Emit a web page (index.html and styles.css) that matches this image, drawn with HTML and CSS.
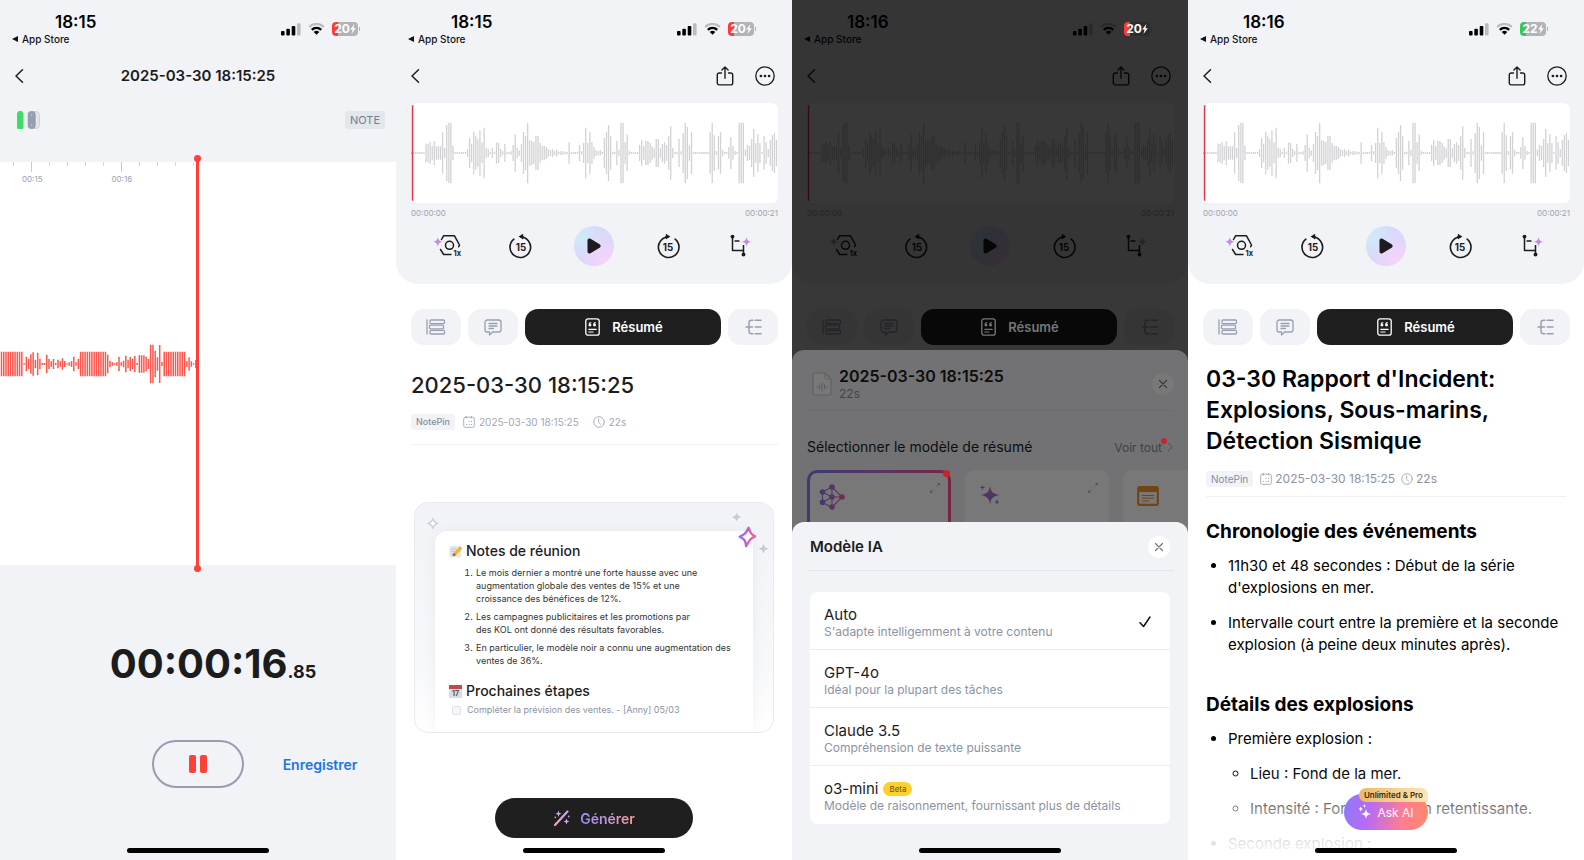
FILE: index.html
```html
<!DOCTYPE html>
<html lang="fr">
<head>
<meta charset="utf-8">
<meta name="viewport" content="width=device-width, initial-scale=1">
<title>Enregistreur vocal</title>
<link rel="stylesheet" href="styles.css">
</head>
<body>
<svg class="sprite" width="0" height="0" aria-hidden="true">
  <defs>
    <linearGradient id="g-spark" x1="0" y1="0" x2="1" y2="0.3"><stop offset="0" stop-color="#7d7ff0"/><stop offset="0.5" stop-color="#c05fc8"/><stop offset="1" stop-color="#f0609a"/></linearGradient>
    <linearGradient id="g-wand" x1="0" y1="0" x2="1" y2="0"><stop offset="0" stop-color="#f0a6b8"/><stop offset="1" stop-color="#c9a0f5"/></linearGradient>
    <linearGradient id="g-net" gradientUnits="userSpaceOnUse" x1="0" y1="0" x2="26" y2="0"><stop offset="0" stop-color="#7d7df0"/><stop offset="0.5" stop-color="#b86fd0"/><stop offset="1" stop-color="#ff5f9a"/></linearGradient>
    <linearGradient id="g-star" gradientUnits="userSpaceOnUse" x1="4" y1="0" x2="18" y2="18"><stop offset="0" stop-color="#e070b0"/><stop offset="1" stop-color="#8a6af0"/></linearGradient>
  </defs>
  <symbol id="i-signal" viewBox="0 0 20 13"><g fill="#000"><rect x="0" y="8" width="3.6" height="4.5" rx="1"/><rect x="5.3" y="5.8" width="3.6" height="6.7" rx="1"/><rect x="10.7" y="3" width="3.6" height="9.5" rx="1"/></g><rect x="16" y="0.3" width="3.6" height="12.2" rx="1" fill="#bcbcc0"/></symbol>
  <symbol id="i-wifi" viewBox="0 0 17 12"><path d="M1.2 4A10.3 10.3 0 0 1 15.8 4" fill="none" stroke="#bcbcc0" stroke-width="2.3"/><path d="M3.8 6.9A6.6 6.6 0 0 1 13.2 6.9" fill="none" stroke="#000" stroke-width="2.3"/><path d="M8.5 11.8 5.7 9A4 4 0 0 1 11.3 9Z" fill="#000"/></symbol>
  <symbol id="i-bolt" viewBox="0 0 6 10"><path d="M4.4 0 0.2 5.6H2.6L1.5 10 5.8 4.2H3.4Z" fill="#fff"/></symbol>
  <symbol id="i-back" viewBox="0 0 10 16"><path d="M8.5 1.8 2 8l6.500 6.200" fill="none" stroke="#1c1c1e" stroke-width="1.500" stroke-linecap="round" stroke-linejoin="round"/></symbol>
  <symbol id="i-share" viewBox="0 0 18 20"><g fill="none" stroke="#1c1c1e" stroke-width="1.400" stroke-linecap="round" stroke-linejoin="round"><path d="M5.500 7H3.200A1.900 1.900 0 0 0 1.300 8.900V17A1.900 1.900 0 0 0 3.200 18.900H14.800A1.900 1.900 0 0 0 16.700 17V8.900A1.900 1.900 0 0 0 14.800 7H12.500"/><path d="M9 12.200V1.200M5.900 4 9 1l3.100 3"/></g></symbol>
  <symbol id="i-more" viewBox="0 0 20 20"><circle cx="10" cy="10" r="9.200" fill="none" stroke="#1c1c1e" stroke-width="1.300"/><g fill="#1c1c1e"><circle cx="5.900" cy="10" r="1.350"/><circle cx="10" cy="10" r="1.350"/><circle cx="14.100" cy="10" r="1.350"/></g></symbol>
  <symbol id="i-speed" viewBox="0 0 30 24"><path d="M4.800 3C5.200 6 6.500 7.300 9.600 7.800 6.500 8.300 5.200 9.600 4.800 12.800 4.400 9.600 3.100 8.300 0 7.800 3.100 7.300 4.400 6 4.800 3Z" fill="#c58ae0"/><g fill="none" stroke="#1c1c1e" stroke-width="1.500" stroke-linecap="round" stroke-linejoin="round"><path d="M8.500 5.500 10.500 1.800H21.500L26.500 11 25.700 12.800"/><path d="M7.500 15.500 10.700 20.500H18"/><circle cx="16.500" cy="11.300" r="4"/></g><text x="20.500" y="22" font-family="Inter, sans-serif" font-size="7.500" font-weight="700" fill="#1c1c1e">1x</text></symbol>
  <symbol id="i-skipback" viewBox="0 0 22 24"><path d="M4.400 5.700A9.500 9.500 0 1 0 10.500 3.600H13" fill="none" stroke="#1c1c1e" stroke-width="1.500" stroke-linecap="round"/><path d="M8.800 3.300 13 0.600V6Z" fill="#1c1c1e"/><text x="11" y="16.600" text-anchor="middle" font-family="Inter, sans-serif" font-size="9" font-weight="700" fill="#1c1c1e">15</text></symbol>
  <symbol id="i-skipfwd" viewBox="0 0 22 24"><path d="M17.600 5.700A9.500 9.500 0 1 1 11.500 3.600H9" fill="none" stroke="#1c1c1e" stroke-width="1.500" stroke-linecap="round"/><path d="M13.200 3.300 9 0.600V6Z" fill="#1c1c1e"/><text x="11" y="16.600" text-anchor="middle" font-family="Inter, sans-serif" font-size="9" font-weight="700" fill="#1c1c1e">15</text></symbol>
  <symbol id="i-play" viewBox="0 0 14 16"><path d="M0.500 2.500C0.500 0.800 2 0 3.500 0.800L12.600 6.300C14 7.100 14 8.900 12.600 9.700L3.500 15.200C2 16 0.500 15.200 0.500 13.500Z" fill="#1c1c1e"/></symbol>
  <symbol id="i-crop" viewBox="0 0 22 24"><g fill="none" stroke="#1c1c1e" stroke-width="1.500" stroke-linejoin="round"><path d="M2.500 2.500V16.500H13.500V21M4.500 7H9.500M13.500 11V17"/></g><circle cx="2.500" cy="2.600" r="1.900" fill="#1c1c1e"/><circle cx="13.500" cy="20.500" r="1.900" fill="#1c1c1e"/><path d="M16.500 2.500C16.900 6 18 7.200 21.500 7.800 18 8.400 16.900 9.600 16.500 13.100 16.100 9.600 15 8.400 11.500 7.800 15 7.200 16.100 6 16.500 2.500Z" fill="#c58ae0"/></symbol>
  <symbol id="i-rows" viewBox="0 0 20 16"><g fill="none" stroke="#98a0b0" stroke-width="1.300" stroke-linecap="round" stroke-linejoin="round"><path d="M1 1V15"/><rect x="4" y="1" width="14.500" height="3.700" rx="1"/><rect x="3.500" y="6.200" width="14" height="3.600" rx="1"/><rect x="4" y="11.300" width="14.500" height="3.700" rx="1"/></g></symbol>
  <symbol id="i-chat" viewBox="0 0 18 17"><g fill="none" stroke="#98a0b0" stroke-width="1.300" stroke-linecap="round" stroke-linejoin="round"><path d="M3.200 1H14.800A2.200 2.200 0 0 1 17 3.200V10.800A2.200 2.200 0 0 1 14.800 13H8.500L5.500 16V13H3.200A2.200 2.200 0 0 1 1 10.800V3.200A2.200 2.200 0 0 1 3.200 1Z"/><path d="M5 4.500H13M5 7H13M5 9.500H9.500"/></g></symbol>
  <symbol id="i-quote" viewBox="0 0 15 18"><rect x="0.800" y="0.800" width="13.400" height="16.400" rx="2.300" fill="none" stroke="#fff" stroke-width="1.300"/><path d="M6.300 4Q3.500 4.300 3.500 6.900A1.450 1.450 0 1 0 4.900 5.500Q5.200 4.900 6.300 4.700ZM10.900 4Q8.100 4.300 8.100 6.900A1.450 1.450 0 1 0 9.500 5.500Q9.800 4.900 10.900 4.700Z" fill="#fff"/><path d="M3.800 11.300H11.200M3.800 14H8" stroke="#fff" stroke-width="1.200" stroke-linecap="round"/></symbol>
  <symbol id="i-tree" viewBox="0 0 17 16"><g fill="none" stroke="#98a0b0" stroke-width="1.500" stroke-linecap="round"><path d="M1 8H7.500M8 1.200H6.500Q4 1.200 4 3.500V12.500Q4 14.800 6.500 14.800H8M10.300 1.200H16M10.300 8H16M10.300 14.800H16"/></g></symbol>
  <symbol id="i-cal" viewBox="0 0 12 12"><g fill="none" stroke="#a0a7b5" stroke-width="0.900" stroke-linecap="round"><rect x="0.700" y="1.200" width="10.600" height="10.200" rx="1.800"/><path d="M3.500 0.500V2M8.500 0.500V2"/></g><g fill="#a0a7b5"><rect x="5.600" y="5" width="1" height="1"/><rect x="8" y="5" width="1" height="1"/><rect x="3.100" y="8" width="1" height="1"/><rect x="5.600" y="8" width="1" height="1"/><rect x="8" y="8" width="1" height="1"/></g></symbol>
  <symbol id="i-clock" viewBox="0 0 12 12"><g fill="none" stroke="#a0a7b5" stroke-width="0.900" stroke-linecap="round"><circle cx="6" cy="6" r="5.300"/><path d="M5.600 3V6.300L7.600 8.200"/></g></symbol>
  <symbol id="i-close" viewBox="0 0 10 10"><path d="M1.500 1.500 8.500 8.500M8.500 1.500 1.500 8.500" stroke="#77777c" stroke-width="1.200" stroke-linecap="round"/></symbol>
  <symbol id="i-expand" viewBox="0 0 12 12"><g stroke="#b4b6ba" fill="#b4b6ba" stroke-width="0.800"><path d="M7.500 4.500 10 2M4.500 7.500 2 10" fill="none"/><path d="M8 1H11V4ZM1 8V11H4Z" stroke="none"/></g></symbol>
  <symbol id="i-home" viewBox="0 0 142 5"><rect width="142" height="5" rx="2.500" fill="#000"/></symbol>
</svg>

<main class="screens">

  <section class="screen screen-gray" aria-label="Enregistrement">
    <header class="status">
      <div class="status-left"><span class="time">18:15</span><a class="back-app" href="#"><span class="tri"></span>App Store</a></div>
      <div class="status-right"><svg class="signal"><use href="#i-signal"/></svg><svg class="wifi"><use href="#i-wifi"/></svg><span class="battery battery-low"><b>20</b><svg class="bolt"><use href="#i-bolt"/></svg></span></div>
    </header>
    <nav class="nav">
      <button class="icon-btn" aria-label="Retour"><svg class="back"><use href="#i-back"/></svg></button>
      <h1 class="nav-title">2025-03-30 18:15:25</h1>
    </nav>
    <div class="device-row">
      <svg class="device" viewBox="0 0 24 20"><path d="M1 2.500H2Q2 1 3 1H5.500Q6.500 1 6.500 2.500H7.500V17.500Q7.500 19 6 19H2.500Q1 19 1 17.500Z" fill="#3ddc68"/><rect x="15" y="1.500" width="8.500" height="17" rx="3.500" fill="#e4e6ea" stroke="#c9ccd3" stroke-width="0.800"/><rect x="11.700" y="1" width="8" height="18" rx="4" fill="#969eb0"/><circle cx="15.700" cy="5" r="0.700" fill="#d4d8e0"/><circle cx="15.700" cy="15" r="0.700" fill="#d4d8e0"/></svg>
      <span class="note">NOTE</span>
    </div>
    <div class="canvas">
      <svg class="ruler" viewBox="0 0 396 12"><path d="M31.500 0V10M121.500 0V10" stroke="#c6cad2"/><path d="M13.500 0V4M49.500 0V4M67.500 0V4M85.500 0V4M103.500 0V4M139.500 0V4M157.500 0V4M175.500 0V4M193.500 0V4" stroke="#d3d6dc"/></svg>
      <div class="ruler-labels"><span>00:15</span><span>00:16</span></div>
      <svg class="live-wave" data-wave="live" viewBox="0 0 198 44"></svg>
      <span class="playhead"></span>
    </div>
    <div class="recorder">
      <p class="timer">00:00:16<small>.85</small></p>
      <div class="rec-row">
        <button class="pause" aria-label="Pause"><span></span><span></span></button>
        <button class="save">Enregistrer</button>
      </div>
    </div>
    <svg class="home"><use href="#i-home"/></svg>
  </section>

  <section class="screen" aria-label="Résumé à générer">
    <div class="player">
      <header class="status">
        <div class="status-left"><span class="time">18:15</span><a class="back-app" href="#"><span class="tri"></span>App Store</a></div>
        <div class="status-right"><svg class="signal"><use href="#i-signal"/></svg><svg class="wifi"><use href="#i-wifi"/></svg><span class="battery battery-low"><b>20</b><svg class="bolt"><use href="#i-bolt"/></svg></span></div>
      </header>
      <nav class="nav">
        <button class="icon-btn" aria-label="Retour"><svg class="back"><use href="#i-back"/></svg></button>
        <div class="nav-actions"><button class="icon-btn" aria-label="Partager"><svg class="share"><use href="#i-share"/></svg></button><button class="icon-btn" aria-label="Plus"><svg class="more"><use href="#i-more"/></svg></button></div>
      </nav>
      <div class="wave-card"><svg data-wave="clip" viewBox="0 0 367 100"></svg></div>
      <div class="times"><span>00:00:00</span><span>00:00:21</span></div>
      <div class="controls">
        <button class="icon-btn" aria-label="Vitesse"><svg class="speed"><use href="#i-speed"/></svg></button>
        <button class="icon-btn" aria-label="Reculer de 15 s"><svg class="skip"><use href="#i-skipback"/></svg></button>
        <button class="play" aria-label="Lecture"><svg><use href="#i-play"/></svg></button>
        <button class="icon-btn" aria-label="Avancer de 15 s"><svg class="skip"><use href="#i-skipfwd"/></svg></button>
        <button class="icon-btn" aria-label="Découper"><svg class="crop"><use href="#i-crop"/></svg></button>
      </div>
    </div>
    <div class="tabs">
      <button class="tab" aria-label="Transcription"><svg class="t-rows"><use href="#i-rows"/></svg></button>
      <button class="tab" aria-label="Notes"><svg class="t-chat"><use href="#i-chat"/></svg></button>
      <button class="tab tab-on"><svg class="t-quote"><use href="#i-quote"/></svg>Résumé</button>
      <button class="tab" aria-label="Carte mentale"><svg class="t-tree"><use href="#i-tree"/></svg></button>
    </div>
    <div class="file-head">
      <h1 class="file-title">2025-03-30 18:15:25</h1>
      <div class="meta"><span class="chip">NotePin</span><svg><use href="#i-cal"/></svg><span class="meta-date">2025-03-30 18:15:25</span><svg><use href="#i-clock"/></svg><span>22s</span></div>
    </div>
    <div class="preview">
      <div class="sheet-sample">
        <h2><svg class="emoji" viewBox="0 0 13 13"><rect x="0.500" y="1" width="11.500" height="11.500" rx="1" fill="#e3e6ea"/><path d="M2 4H8M2 6.300H6M2 9H5" stroke="#b6bcc4" stroke-width="0.700"/><path d="M3.500 11 4.800 7.800 10 2.200 12.600 4.600 7 10.200Z" fill="#f5b52e"/><path d="M3.500 11 4.800 7.800 7 10.200Z" fill="#8a5a2c"/><path d="M10 2.200 11 1.300 13 3.500 12.600 4.600Z" fill="#e98a8a"/></svg>Notes de réunion</h2>
        <ol>
          <li>Le mois dernier a montré une forte hausse avec une<br>augmentation globale des ventes de 15% et une<br>croissance des bénéfices de 12%.</li>
          <li>Les campagnes publicitaires et les promotions par<br>des KOL ont donné des résultats favorables.</li>
          <li>En particulier, le modèle noir a connu une augmentation des<br>ventes de 36%.</li>
        </ol>
        <h2 class="steps"><svg class="emoji" viewBox="0 0 13 13"><rect x="0" y="0" width="13" height="13" rx="0.800" fill="#dcdcdf"/><rect x="0" y="0" width="13" height="4" rx="0.600" fill="#c2484c"/><text x="6.500" y="11.200" text-anchor="middle" font-family="Inter, sans-serif" font-size="7" font-weight="700" fill="#55585e">17</text></svg>Prochaines étapes</h2>
        <label class="todo"><input type="checkbox">Compléter la prévision des ventes. - [Anny] 05/03</label>
      </div>
      <svg class="deco" viewBox="0 0 360 60"><path d="M18 15.500C18.600 18.500 19.500 19.500 23 20.500 19.500 21.500 18.600 22.500 18 25.500 17.400 22.500 16.500 21.500 13 20.500 16.500 19.500 17.400 18.500 18 15.500Z" fill="#fff" stroke="#ced1d9" stroke-width="1.500" stroke-linejoin="round"/><path d="M323.800 10.500 324.600 13 327.200 13.800 324.700 15.200 323.600 17.800 322.200 15.400 319.600 14.500 322.200 13Z" fill="#c5c9d3" stroke="#c5c9d3" stroke-width="0.800"/><path d="M335.500 25C337.500 30.500 337.500 31 342 33.500 337.500 35.500 336.500 37.500 333 43.500 332.500 37.500 331.500 36.500 326.500 34 331.500 31.500 332.500 31 335.500 25Z" fill="#fff" stroke="url(#g-spark)" stroke-width="2.400" stroke-linejoin="round"/><path d="M350.500 42 351.500 45 354.500 46 351.500 47 350.500 50 349.500 47 346.500 46 349.500 45Z" fill="#c5c9d3" stroke="#c5c9d3"/></svg>
    </div>
    <button class="generate"><svg viewBox="0 0 18 18"><path d="M2 16 14.500 2.500" stroke="url(#g-wand)" stroke-width="2.200" stroke-linecap="round"/><path d="M5.500 1.500 6.300 3.900 8.600 4.700 6.300 5.500 5.500 8 4.700 5.500 2.400 4.700 4.700 3.900ZM13.500 9.500 14.300 11.700 16.500 12.500 14.300 13.300 13.500 15.500 12.700 13.300 10.500 12.500 12.700 11.700Z" fill="#d8b0e8"/><circle cx="2.300" cy="8.300" r="0.900" fill="#d8a0d0"/><circle cx="15.700" cy="7.500" r="0.900" fill="#c0a0f0"/></svg><span>Générer</span></button>
    <svg class="home"><use href="#i-home"/></svg>
  </section>

  <section class="screen screen-modal" aria-label="Choix du modèle">
    <div class="player">
      <header class="status">
        <div class="status-left"><span class="time">18:16</span><a class="back-app" href="#"><span class="tri"></span>App Store</a></div>
        <div class="status-right"><svg class="signal"><use href="#i-signal"/></svg><svg class="wifi"><use href="#i-wifi"/></svg><span class="battery battery-low battery-top"><b>20</b><svg class="bolt"><use href="#i-bolt"/></svg></span></div>
      </header>
      <nav class="nav">
        <button class="icon-btn" aria-label="Retour"><svg class="back"><use href="#i-back"/></svg></button>
        <div class="nav-actions"><button class="icon-btn" aria-label="Partager"><svg class="share"><use href="#i-share"/></svg></button><button class="icon-btn" aria-label="Plus"><svg class="more"><use href="#i-more"/></svg></button></div>
      </nav>
      <div class="wave-card"><svg data-wave="clip" viewBox="0 0 367 100"></svg></div>
      <div class="times"><span>00:00:00</span><span>00:00:21</span></div>
      <div class="controls">
        <button class="icon-btn" aria-label="Vitesse"><svg class="speed"><use href="#i-speed"/></svg></button>
        <button class="icon-btn" aria-label="Reculer de 15 s"><svg class="skip"><use href="#i-skipback"/></svg></button>
        <button class="play" aria-label="Lecture"><svg><use href="#i-play"/></svg></button>
        <button class="icon-btn" aria-label="Avancer de 15 s"><svg class="skip"><use href="#i-skipfwd"/></svg></button>
        <button class="icon-btn" aria-label="Découper"><svg class="crop"><use href="#i-crop"/></svg></button>
      </div>
    </div>
    <div class="tabs">
      <button class="tab" aria-label="Transcription"><svg class="t-rows"><use href="#i-rows"/></svg></button>
      <button class="tab" aria-label="Notes"><svg class="t-chat"><use href="#i-chat"/></svg></button>
      <button class="tab tab-on"><svg class="t-quote"><use href="#i-quote"/></svg>Résumé</button>
      <button class="tab" aria-label="Carte mentale"><svg class="t-tree"><use href="#i-tree"/></svg></button>
    </div>
    <div class="scrim"></div>
    <div class="sheet sheet-back">
      <div class="sheet-file">
        <svg class="doc" viewBox="0 0 20 24"><path d="M3.500 1H13L19 7V20.500Q19 23 16.500 23H3.500Q1 23 1 20.500V3.500Q1 1 3.500 1Z" fill="#fff" stroke="#c8cbd2" stroke-width="1.200"/><path d="M13 1V5.500Q13 7 14.500 7H19" fill="none" stroke="#c8cbd2"/><path d="M5 14V16M7.500 12.500V17.500M10 11V19M12.500 12.500V17.500M15 14V16" stroke="#b8bcc6"/></svg>
        <div class="sheet-file-text"><h2>2025-03-30 18:15:25</h2><span>22s</span></div>
        <button class="close" aria-label="Fermer"><svg><use href="#i-close"/></svg></button>
      </div>
      <div class="sheet-section"><h3>Sélectionner le modèle de résumé</h3><a href="#" class="see-all">Voir tout<span class="dot"></span><svg viewBox="0 0 6 10"><path d="M1 0.800 5 5 1 9.200" fill="none" stroke="#a7abb5"/></svg></a></div>
      <div class="templates">
        <div class="template template-on"><svg class="net" viewBox="0 0 26 26"><g fill="none" stroke="url(#g-net)" stroke-width="1.100"><path d="M13 3 3.500 8V18.500L13 23.500 23 13ZM13 3.010 13.010 23.500M3.500 8 13 13 3.500 18.500M13 13.010H23"/></g><g fill="url(#g-net)"><circle cx="13" cy="3" r="2.800"/><circle cx="3.500" cy="8" r="2.800"/><circle cx="3.500" cy="18.300" r="2.800"/><circle cx="13" cy="23" r="2.800"/><circle cx="13" cy="13" r="2.800"/><circle cx="23" cy="13" r="2.800"/></g></svg><svg class="expand"><use href="#i-expand"/></svg><span class="dot dot-lg"></span></div>
        <div class="template"><svg class="stars" viewBox="0 0 20 22"><path d="M10 1.500C11 8 12.500 9.500 19.500 11 12.500 12.500 11 14 10 20.500 9 14 7.500 12.500 0.500 11 7.500 9.500 9 8 10 1.500Z" fill="url(#g-star)"/><path d="M2.500 1.500V5.500M0.500 3.500H4.500M17 16V20M15 18H19" stroke="#9a80b8" stroke-width="1.200"/></svg><svg class="expand"><use href="#i-expand"/></svg></div>
        <div class="template"><svg class="pad" viewBox="0 0 22 20"><rect x="1.200" y="1.200" width="19.600" height="17.600" rx="1.500" fill="#fff" stroke="#f2922e" stroke-width="2.200"/><path d="M1 1H21V6H1Z" fill="#f2922e"/><path d="M5 9.500H17M5 12.200H17M5 15H12" stroke="#f2922e"/></svg></div>
      </div>
    </div>
    <div class="scrim"></div>
    <div class="sheet sheet-front">
      <div class="model-head"><h2>Modèle IA</h2><button class="close" aria-label="Fermer"><svg><use href="#i-close"/></svg></button></div>
      <div class="models">
        <label class="model"><span class="model-text"><span class="model-name">Auto</span><span class="model-sub">S'adapte intelligemment à votre contenu</span></span><input type="radio" name="model" checked><svg class="tick" viewBox="0 0 12 12"><path d="M1 6.800 4.500 10.500 11 1" fill="none" stroke="#111" stroke-width="1.500" stroke-linecap="round" stroke-linejoin="round"/></svg></label>
        <label class="model"><span class="model-text"><span class="model-name">GPT-4o</span><span class="model-sub">Idéal pour la plupart des tâches</span></span><input type="radio" name="model"></label>
        <label class="model"><span class="model-text"><span class="model-name">Claude 3.5</span><span class="model-sub">Compréhension de texte puissante</span></span><input type="radio" name="model"></label>
        <label class="model"><span class="model-text"><span class="model-name">o3-mini <em>Beta</em></span><span class="model-sub">Modèle de raisonnement, fournissant plus de détails</span></span><input type="radio" name="model"></label>
      </div>
      <svg class="home"><use href="#i-home"/></svg>
    </div>
  </section>

  <section class="screen" aria-label="Résumé">
    <div class="player">
      <header class="status">
        <div class="status-left"><span class="time">18:16</span><a class="back-app" href="#"><span class="tri"></span>App Store</a></div>
        <div class="status-right"><svg class="signal"><use href="#i-signal"/></svg><svg class="wifi"><use href="#i-wifi"/></svg><span class="battery battery-ok"><b>22</b><svg class="bolt"><use href="#i-bolt"/></svg></span></div>
      </header>
      <nav class="nav">
        <button class="icon-btn" aria-label="Retour"><svg class="back"><use href="#i-back"/></svg></button>
        <div class="nav-actions"><button class="icon-btn" aria-label="Partager"><svg class="share"><use href="#i-share"/></svg></button><button class="icon-btn" aria-label="Plus"><svg class="more"><use href="#i-more"/></svg></button></div>
      </nav>
      <div class="wave-card"><svg data-wave="clip" viewBox="0 0 367 100"></svg></div>
      <div class="times"><span>00:00:00</span><span>00:00:21</span></div>
      <div class="controls">
        <button class="icon-btn" aria-label="Vitesse"><svg class="speed"><use href="#i-speed"/></svg></button>
        <button class="icon-btn" aria-label="Reculer de 15 s"><svg class="skip"><use href="#i-skipback"/></svg></button>
        <button class="play" aria-label="Lecture"><svg><use href="#i-play"/></svg></button>
        <button class="icon-btn" aria-label="Avancer de 15 s"><svg class="skip"><use href="#i-skipfwd"/></svg></button>
        <button class="icon-btn" aria-label="Découper"><svg class="crop"><use href="#i-crop"/></svg></button>
      </div>
    </div>
    <div class="tabs">
      <button class="tab" aria-label="Transcription"><svg class="t-rows"><use href="#i-rows"/></svg></button>
      <button class="tab" aria-label="Notes"><svg class="t-chat"><use href="#i-chat"/></svg></button>
      <button class="tab tab-on"><svg class="t-quote"><use href="#i-quote"/></svg>Résumé</button>
      <button class="tab" aria-label="Carte mentale"><svg class="t-tree"><use href="#i-tree"/></svg></button>
    </div>
    <article class="report">
      <h1>03-30 Rapport d'Incident:<br>Explosions, Sous-marins,<br>Détection Sismique</h1>
      <div class="meta meta-lg"><span class="chip">NotePin</span><svg><use href="#i-cal"/></svg><span class="meta-date">2025-03-30 18:15:25</span><svg><use href="#i-clock"/></svg><span>22s</span></div>
      <h2>Chronologie des événements</h2>
      <ul>
        <li>11h30 et 48 secondes : Début de la série<br>d'explosions en mer.</li>
        <li>Intervalle court entre la première et la seconde<br>explosion (à peine deux minutes après).</li>
      </ul>
      <h2>Détails des explosions</h2>
      <ul>
        <li>Première explosion :
          <ul><li>Lieu : Fond de la mer.</li><li>Intensité : Forte explosion retentissante.</li></ul>
        </li>
        <li>Seconde explosion :</li>
      </ul>
    </article>
    <div class="fade"></div>
    <button class="ask"><svg viewBox="0 0 14 16"><path d="M8 4.500C8.500 8.500 9.500 9.500 13.500 10 9.500 10.600 8.500 11.600 8 15.500 7.500 11.600 6.500 10.600 2.500 10 6.500 9.500 7.500 8.500 8 4.500ZM2.700 2C3 4.200 3.500 4.600 5.500 5 3.500 5.400 3 5.900 2.700 8 2.400 5.900 1.900 5.400 0 5 1.900 4.600 2.400 4.200 2.700 2ZM6.500 0 7 1.500 8.500 2 7 2.500 6.500 4 6 2.500 4.500 2 6 1.500Z" fill="#fff"/></svg>Ask AI<span class="badge">Unlimited &amp; Pro</span></button>
    <svg class="home"><use href="#i-home"/></svg>
  </section>

</main>
<script src="waves.js"></script>
</body>
</html>
```

FILE: styles.css
```css
* { box-sizing: border-box; }
body { margin: 0; font-family: Inter, "Liberation Sans", sans-serif; color: #1c1c1e; background: #fff; }
h1, h2, h3, p, ol, ul { margin: 0; padding: 0; }
button { border: 0; padding: 0; background: none; font: inherit; color: inherit; cursor: pointer; }
a { color: inherit; text-decoration: none; }
svg { display: block; flex: none; }
.sprite { position: absolute; }

.screens { display: grid; grid-template-columns: repeat(4, 1fr); height: 100vh; }
.screen { position: relative; display: flex; flex-direction: column; overflow: hidden; min-width: 0; background: #fff; }
.screen-gray { background: #f2f3f7; }

/* status bar and navigation */
.status { display: flex; justify-content: space-between; height: 54px; padding: 12px 38px 0 12px; flex: none; }
.status-left { display: flex; flex-direction: column; }
.time { padding-left: 43px; font-size: 17px; line-height: 21px; font-weight: 600; color: #000; }
.back-app { display: flex; align-items: center; gap: 4px; font-size: 10px; line-height: 12px; font-weight: 500; color: #111; }
.tri { border: 3px solid transparent; border-right: 6px solid #111; border-left: 0; }
.status-right { display: flex; align-items: center; gap: 7px; height: 34px; }
.signal { width: 20px; height: 13px; }
.wifi { width: 17px; height: 12px; }
.battery { position: relative; display: flex; align-items: center; justify-content: center; width: 26px; height: 14px; border-radius: 4px; color: #fff; font-size: 12px; line-height: 14px; }
.battery::after { content: ""; position: absolute; left: 27px; top: 5px; width: 1px; height: 4px; background: #b3b3b7; }
.battery-low { background: linear-gradient(90deg, #ff3b30 6px, #b3b3b7 6px); }
.battery-ok { background: linear-gradient(90deg, #34c759 6px, #b3b3b7 6px); }
.battery-top { z-index: 5; background: linear-gradient(90deg, #ff3b30 6px, #2c2c2e 6px); }
.battery-top::after { background: #2c2c2e; }
.bolt { width: 6px; height: 10px; }
.nav { display: flex; align-items: center; justify-content: space-between; position: relative; height: 44px; padding: 0 17px 0 14px; flex: none; }
.nav-title { position: absolute; left: 0; right: 0; text-align: center; font-size: 15px; line-height: 20px; font-weight: 600; pointer-events: none; }
.nav-actions { display: flex; align-items: center; gap: 21px; }
.back { width: 10px; height: 16px; }
.share { width: 18px; height: 20px; }
.more { width: 20px; height: 20px; }

/* recording */
.device-row { display: flex; align-items: center; justify-content: space-between; height: 44px; padding: 0 11px 0 16px; flex: none; }
.device { width: 24px; height: 20px; }
.note { padding: 0 5px; border-radius: 3px; background: #e3e6eb; color: #757d92; font-size: 11px; line-height: 18px; }
.canvas { position: relative; display: flex; flex-direction: column; margin-top: 20px; flex: 403 1 0; background: #fff; }
.ruler { width: 100%; }
.ruler-labels { display: flex; gap: 69px; padding-left: 22px; font-size: 8px; line-height: 10px; color: #9aa1af; }
.live-wave { width: 50%; margin: auto 0; padding-bottom: 22px; box-sizing: content-box; }
.playhead { position: absolute; top: -6px; bottom: -6px; left: 50%; width: 3px; margin-left: -2px; background: linear-gradient(#ff4038, #ff4038) 0 50% / 100% calc(100% - 6px) no-repeat; }
.playhead::before, .playhead::after { content: ""; position: absolute; left: -2px; width: 7px; height: 7px; border-radius: 50%; background: #ff4038; }
.playhead::before { top: -1px; }
.playhead::after { bottom: -1px; }
.recorder { flex: 295 1 0; }
.timer { padding: 75px 0 0 30px; text-align: center; font-size: 40px; line-height: 48px; font-weight: 700; }
.timer small { font-size: 18px; font-weight: 700; }
.rec-row { display: grid; grid-template-columns: 1fr auto 1fr; align-items: center; margin-top: 44px; }
.pause { grid-column: 2; display: flex; align-items: center; justify-content: center; gap: 4px; width: 92px; height: 48px; border: 2px solid #959db1; border-radius: 24px; }
.pause span { width: 7px; height: 18px; border-radius: 2px; background: #ff4038; }
.save { justify-self: center; font-size: 14px; font-weight: 600; color: #1976e8; }
.home { position: absolute; bottom: 7px; left: 50%; width: 142px; height: 5px; margin-left: -71px; z-index: 4; }

/* player */
.player { flex: none; background: #f2f3f7; border-radius: 0 0 22px 22px; height: 284px; }
.wave-card { margin: 5px 14px 0 15px; border-radius: 6px; background: #fff; overflow: hidden; }
.wave-card svg { width: 100%; }
.times { display: flex; justify-content: space-between; padding: 5px 14px 0 15px; font-size: 8px; line-height: 10px; color: #9aa1af; }
.controls { display: grid; grid-template-columns: repeat(5, 1fr); align-items: center; justify-items: center; padding: 8px 14px 0 15px; }
.speed { width: 30px; height: 24px; }
.skip { width: 24px; height: 26px; }
.crop { width: 22px; height: 24px; }
.play { display: flex; align-items: center; justify-content: center; width: 40px; height: 40px; border-radius: 50%; background: radial-gradient(circle at 15% 25%, #cfeafa, transparent 50%), radial-gradient(circle at 75% 85%, #f6d3fa, transparent 60%), #d8d9fa; }
.play svg { width: 14px; height: 16px; }
.tabs { display: flex; gap: 7px; padding: 25px 14px 0 15px; flex: none; }
.tab { display: flex; align-items: center; justify-content: center; gap: 12px; width: 50px; height: 36px; border-radius: 13px; background: #f2f3f7; }
.tab-on { flex: 1; padding-left: 2px; background: #1f1f1f; color: #fff; font-size: 13px; font-weight: 600; }
.t-rows { width: 20px; height: 16px; }
.t-chat { width: 18px; height: 17px; }
.t-quote { width: 15px; height: 18px; }
.t-tree { width: 17px; height: 16px; }

/* file to summarise */
.file-head { margin: 26px 14px 0 15px; padding-bottom: 14px; border-bottom: 1px solid #f0f1f4; }
.file-title { font-size: 22px; line-height: 28px; font-weight: 500; }
.meta { display: flex; align-items: center; gap: 4px; margin-top: 15px; font-size: 10px; line-height: 16px; color: #a0a7b5; }
.meta svg { width: 12px; height: 12px; }
.chip { margin-right: 4px; padding: 0 5px; border-radius: 3px; background: #f2f3f7; color: #858d9c; font-size: 9px; line-height: 16px; font-weight: 500; }
.meta-date { margin-right: 10px; }
.preview { position: relative; margin: 57px 18px 0; padding: 28px 20px 0; border: 1px solid #e8eaee; border-radius: 14px; overflow: hidden; background: linear-gradient(#f2f3f7, #f7f8fa 70%, #fff); }
.sheet-sample { padding: 11px 14px 15px; border-radius: 12px 12px 0 0; background: #fff; box-shadow: 0 0 12px rgba(120, 130, 160, 0.1); }
.sheet-sample h2 { display: flex; align-items: center; gap: 4px; font-size: 14px; line-height: 18px; font-weight: 500; }
.emoji { width: 13px; height: 13px; }
.sheet-sample ol { padding-left: 26px; margin-top: 6px; font-size: 9px; line-height: 13px; color: #333; }
.sheet-sample li { margin-bottom: 5px; padding-left: 1px; white-space: nowrap; }
.sheet-sample .steps { margin-top: 15px; }
.todo { display: flex; align-items: center; gap: 6px; margin-top: 3px; padding-left: 3px; font-size: 9px; line-height: 14px; color: #8b93a3; }
.todo input { appearance: none; width: 9px; height: 9px; margin: 0; border: 1px solid #dde1ea; border-radius: 2px; background: #f4f6fa; }
.deco { position: absolute; top: 0; left: 0; width: 100%; }
.generate { display: flex; align-items: center; justify-content: center; gap: 9px; width: 50%; height: 40px; margin: auto auto 22px; border-radius: 20px; background: #1f1f1f; font-size: 14px; font-weight: 600; }
.generate svg { width: 18px; height: 18px; }
.generate span { background: linear-gradient(90deg, #9d8cf5, #c795dc 50%, #ff9d9d); background-clip: text; -webkit-background-clip: text; color: transparent; }

/* modal */
.scrim { position: absolute; inset: 0; background: rgba(0, 0, 0, 0.53); }
.screen-modal .tab-on { position: relative; z-index: 1; background: #080808; color: #767676; }
.screen-modal .t-quote { opacity: 0.45; }
.sheet { position: absolute; left: 0; right: 0; bottom: 0; border-radius: 12px 12px 0 0; background: #f2f3f7; }
.sheet-back { height: 510px; padding: 15px 0 0 15px; overflow: hidden; }
.sheet-file { display: flex; align-items: center; height: 46px; margin-right: 14px; padding: 0 0 8px 5px; border-bottom: 1px solid #e2e4e9; }
.doc { width: 20px; height: 24px; }
.sheet-file-text { flex: 1; padding-left: 7px; }
.sheet-file h2 { font-size: 16px; line-height: 20px; font-weight: 600; }
.sheet-file span { display: block; font-size: 12px; line-height: 16px; color: #8b93a3; }
.close { display: flex; align-items: center; justify-content: center; width: 22px; height: 22px; border-radius: 50%; background: #fff; }
.close svg { width: 10px; height: 10px; }
.sheet-section { display: flex; align-items: center; justify-content: space-between; margin: 26px 15px 0 0; }
.sheet-section h3 { font-size: 14px; line-height: 20px; font-weight: 400; }
.see-all { position: relative; display: flex; align-items: center; gap: 5px; font-size: 12px; color: #858d9c; }
.see-all svg { width: 6px; height: 10px; }
.dot { position: absolute; top: -2px; right: 6px; width: 6px; height: 6px; border-radius: 50%; background: #c9242c; z-index: 1; }
.dot-lg { top: -3px; right: -2px; width: 7px; height: 7px; }
.templates { display: flex; gap: 14px; margin-top: 13px; }
.template { position: relative; display: flex; flex: none; justify-content: space-between; width: 144px; height: 90px; padding: 14px 10px 0 15px; border-radius: 10px; background: #fff; }
.template:last-child { padding-left: 14px; }
.template-on { padding: 11px 7px 0 9px; border: 3px solid transparent; background: linear-gradient(#fff, #fff) padding-box, linear-gradient(90deg, #7d7df5, #c06fd0 50%, #ff4f90) border-box; }
.net { width: 26px; height: 26px; }
.stars { width: 20px; height: 22px; }
.pad { width: 22px; height: 20px; margin-top: 2px; }
.expand { width: 12px; height: 12px; margin-top: -2px; }
.sheet-front { padding: 0 14px 36px 15px; }
.model-head { display: flex; align-items: center; justify-content: space-between; height: 49px; padding: 1px 4px 0 3px; border-bottom: 1px solid #e4e6eb; }
.model-head h2 { font-size: 15px; line-height: 20px; font-weight: 600; }
.models { margin: 21px 4px 0 3px; border-radius: 8px; background: #fff; }
.model { display: flex; align-items: center; justify-content: space-between; height: 58px; padding: 3px 19px 0 14px; border-bottom: 1px solid #ebedf0; }
.model:last-child { border-bottom: 0; }
.model-text { display: flex; flex-direction: column; }
.model-name { display: flex; align-items: center; gap: 5px; font-size: 15px; line-height: 19px; }
.model-name em { padding: 0 6px; border-radius: 7px; background: #fcd02e; color: #6b5410; font-size: 8px; line-height: 14px; font-style: normal; }
.model-sub { font-size: 12px; line-height: 16px; color: #8b93a3; }
.model input { position: absolute; opacity: 0; width: 0; height: 0; margin: 0; }
.tick { width: 12px; height: 12px; }

/* report */
.report { padding: 19px 18px 0 18px; color: #000; }
.report h1 { font-size: 23px; line-height: 31px; font-weight: 600; white-space: nowrap; }
.meta-lg { gap: 3px; margin-top: 14px; padding-bottom: 9px; border-bottom: 1px solid #f0f1f4; font-size: 12px; color: #8b93a3; }
.meta-lg .chip { padding: 0 5px; font-size: 10px; font-weight: 400; }
.meta-lg .meta-date { margin-right: 3px; }
.report h2 { margin-top: 21px; font-size: 19px; line-height: 28px; font-weight: 700; }
.report ul { padding-left: 22px; font-size: 15px; line-height: 22px; white-space: nowrap; }
.report ul + h2 { margin-top: 35px; }
.report h2 + ul { margin-top: 9px; }
.report li { margin-bottom: 13px; }
.report ul ul { margin-top: 13px; }
.fade { position: absolute; left: 0; right: 0; bottom: 0; height: 90px; background: linear-gradient(rgba(255, 255, 255, 0), rgba(255, 255, 255, 0.85) 75%, #fff); }
.ask { position: absolute; left: 50%; bottom: 30px; display: flex; align-items: center; justify-content: center; gap: 5px; width: 84px; height: 36px; margin-left: -42px; border-radius: 18px; background: linear-gradient(100deg, #8a7bf8, #b76af5 30%, #ff7d92 70%, #ff8a66); color: #fff; font-size: 12px; }
.ask svg { width: 14px; height: 16px; }
.badge { position: absolute; top: -6px; right: 0; padding: 0 5px; border-radius: 7px 7px 0 7px; background: linear-gradient(90deg, #e9b96e, #fbe6b4); color: #3b2a10; font-size: 8px; line-height: 14px; font-weight: 600; white-space: nowrap; }
```

FILE: waves.js
```js
// Amplitudes, as half heights of each bar, in thirds of a unit.
const waves = {
  clip: {
    step: 2.074, start: 0.5, mid: 50, color: "#d2d2d5", width: 1.3,
    bars: [3,3,3,3,3,3,3,28,28,33,22,36,20,20,20,62,15,84,91,91,22,3,3,3,3,3,3,12,45,28,64,50,41,68,31,76,15,12,4,15,4,32,30,12,5,27,4,3,5,24,56,16,8,27,63,52,91,38,36,33,51,51,30,22,22,18,12,8,12,6,10,4,6,5,4,4,32,3,3,3,3,24,5,30,76,30,62,33,18,8,6,8,4,45,63,84,50,4,4,37,10,91,91,32,55,5,3,3,3,3,24,38,20,36,36,30,20,14,42,42,14,27,32,24,50,80,15,4,3,42,5,60,91,78,23,63,3,3,3,3,3,3,3,3,62,90,53,6,50,62,10,3,3,18,48,20,6,3,91,91,91,10,24,22,42,72,30,56,30,3,50,32,12,38,54,60,40]
  },
  live: {
    step: 2.26, start: 1.5, mid: 22, color: "#ff554c", width: 1.5,
    bars: [37,37,37,37,37,37,37,37,37,37,2,22,16,29,35,12,34,16,3,3,28,15,8,15,3,13,8,17,9,2,5,9,22,5,16,37,37,37,37,37,37,37,37,37,37,37,37,28,10,5,2,5,22,5,10,25,13,21,16,24,3,26,26,26,22,15,58,58,40,20,57,6,37,37,37,37,37,37,37,37,37,37,8,20,8,2,12]
  }
};

for (const svg of document.querySelectorAll("[data-wave]")) {
  const wave = waves[svg.dataset.wave];
  const path = document.createElementNS("http://www.w3.org/2000/svg", "path");
  path.setAttribute("d", wave.bars.map((bar, i) => {
    const x = (wave.start + i * wave.step).toFixed(2);
    const half = Math.max(bar, 2) / 3;
    return `M${x} ${(wave.mid - half).toFixed(1)}V${(wave.mid + half).toFixed(1)}`;
  }).join(""));
  path.setAttribute("stroke", wave.color);
  path.setAttribute("stroke-width", wave.width);
  svg.append(path);
  if (svg.dataset.wave === "clip") {
    const cursor = document.createElementNS("http://www.w3.org/2000/svg", "path");
    cursor.setAttribute("d", "M1.500 2V98");
    cursor.setAttribute("stroke", "#e5343c");
    cursor.setAttribute("stroke-width", "1.500");
    svg.append(cursor);
  }
}
```
